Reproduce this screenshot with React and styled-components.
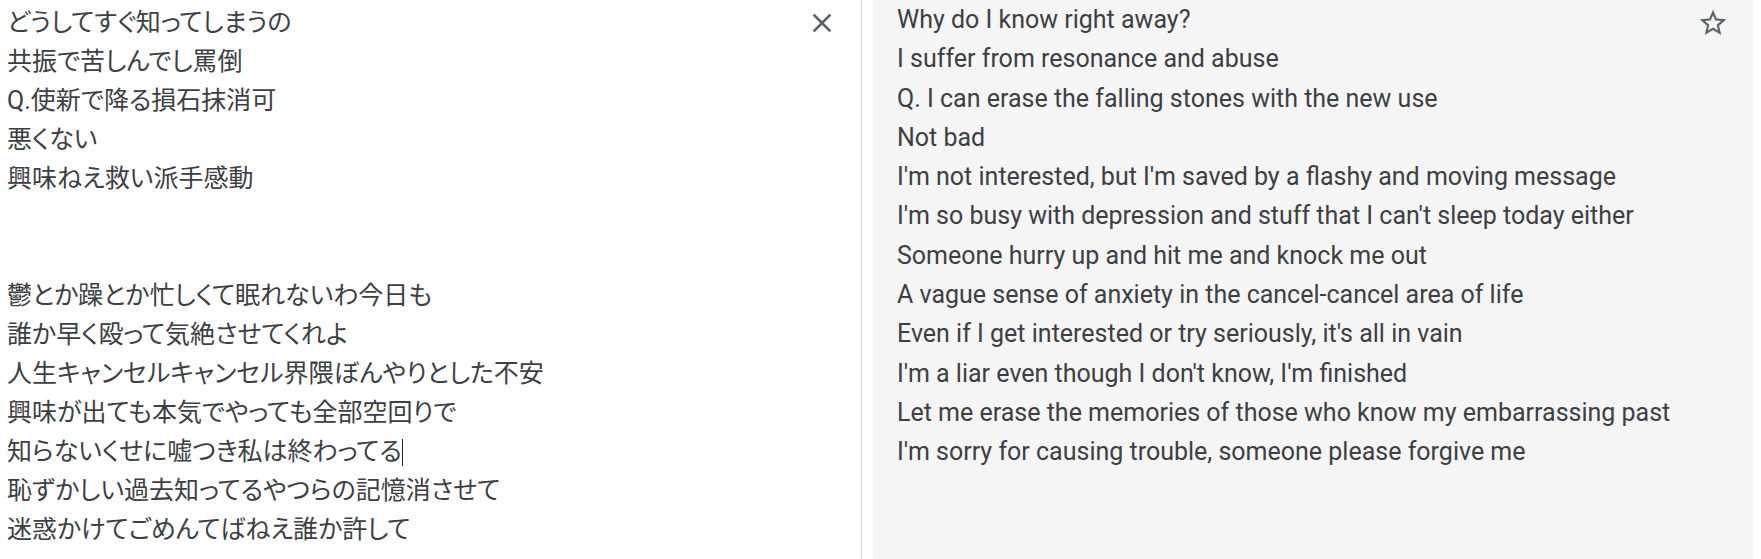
import React from "react"
import styled, { createGlobalStyle } from "styled-components"

const GlobalStyle = createGlobalStyle`
html, body {
    margin: 0;
    padding: 0;
    background: #fff;
}
`

const Page = styled.div`
display: flex;
width: 1761px;
height: 559px;
overflow: hidden;
background: #fff;
`

const SourcePane = styled.div`
display: flex;
width: 862px;
border-right: 1px solid #dadce0;
padding-left: 7px;
padding-right: 23px;
box-sizing: border-box;
`

const TargetPane = styled.div`
display: flex;
flex: 1;
margin: 0 8px 0 11px;
padding-left: 24px;
padding-right: 24px;
background: #f5f5f5;
`

const Lines = styled.div`
flex: 1;
padding-top: ${props => props.$top}px;
font-family: ${props => props.$cjk ? `Roboto, "Noto Sans CJK JP", sans-serif` : `Roboto, sans-serif`};
font-size: ${props => props.$size}px;
font-feature-settings: ${props => props.$cjk ? `"palt"` : `normal`};
color: #3c4043;
`

const Line = styled.div`
height: ${props => props.$lh}px;
line-height: ${props => props.$lh}px;
white-space: pre;
`

const Caret = styled.span`
display: inline-block;
width: 0;
height: 27px;
border-left: 1px solid #202124;
vertical-align: -6px;
`

const IconButton = styled.div`
width: 32px;
height: 32px;
margin-top: 7px;
color: #5f6368;
svg {
    display: block;
    width: 32px;
    height: 32px;
    fill: currentColor;
}
`

const source = [
    "どうしてすぐ知ってしまうの",
    "共振で苦しんでし罵倒",
    "Q.使新で降る損石抹消可",
    "悪くない",
    "興味ねえ救い派手感動",
    "",
    "",
    "鬱とか躁とか忙しくて眠れないわ今日も",
    "誰か早く殴って気絶させてくれよ",
    "人生キャンセルキャンセル界隈ぼんやりとした不安",
    "興味が出ても本気でやっても全部空回りで",
    "知らないくせに嘘つき私は終わってる",
    "恥ずかしい過去知ってるやつらの記憶消させて",
    "迷惑かけてごめんてばねえ誰か許して",
]

const target = [
    "Why do I know right away?",
    "I suffer from resonance and abuse",
    "Q. I can erase the falling stones with the new use",
    "Not bad",
    "I'm not interested, but I'm saved by a flashy and moving message",
    "I'm so busy with depression and stuff that I can't sleep today either",
    "Someone hurry up and hit me and knock me out",
    "A vague sense of anxiety in the cancel-cancel area of life",
    "Even if I get interested or try seriously, it's all in vain",
    "I'm a liar even though I don't know, I'm finished",
    "Let me erase the memories of those who know my embarrassing past",
    "I'm sorry for causing trouble, someone please forgive me",
]

export default function App() {
    return (
        <Page>
            <GlobalStyle />
            <SourcePane>
                <Lines $cjk $size={25} $top={3}>
                    {source.map((text, i) => (
                        <Line key={i} $lh={39}>
                            {text}
                            {i === 11 ? <Caret /> : ``}
                        </Line>
                    ))}
                </Lines>
                <IconButton title="Clear source text">
                    <svg viewBox="0 0 24 24">
                        <path d="M19 6.41L17.59 5 12 10.59 6.41 5 5 6.41 10.59 12 5 17.59 6.41 19 12 13.41 17.59 19 19 17.59 13.41 12z" />
                    </svg>
                </IconButton>
            </SourcePane>
            <TargetPane>
                <Lines $size={25} $top={0}>
                    {target.map((text, i) => (
                        <Line key={i} $lh={39.3}>{text}</Line>
                    ))}
                </Lines>
                <IconButton title="Save translation">
                    <svg viewBox="0 0 24 24">
                        <path d="M22 9.24l-7.19-.62L12 2 9.19 8.63 2 9.24l5.46 4.73L5.82 21 12 17.27 18.18 21l-1.63-7.03L22 9.24zM12 15.4l-3.76 2.27 1-4.28-3.32-2.88 4.38-.38L12 6.1l1.71 4.04 4.38.38-3.32 2.88 1 4.28L12 15.4z" />
                    </svg>
                </IconButton>
            </TargetPane>
        </Page>
    )
}
